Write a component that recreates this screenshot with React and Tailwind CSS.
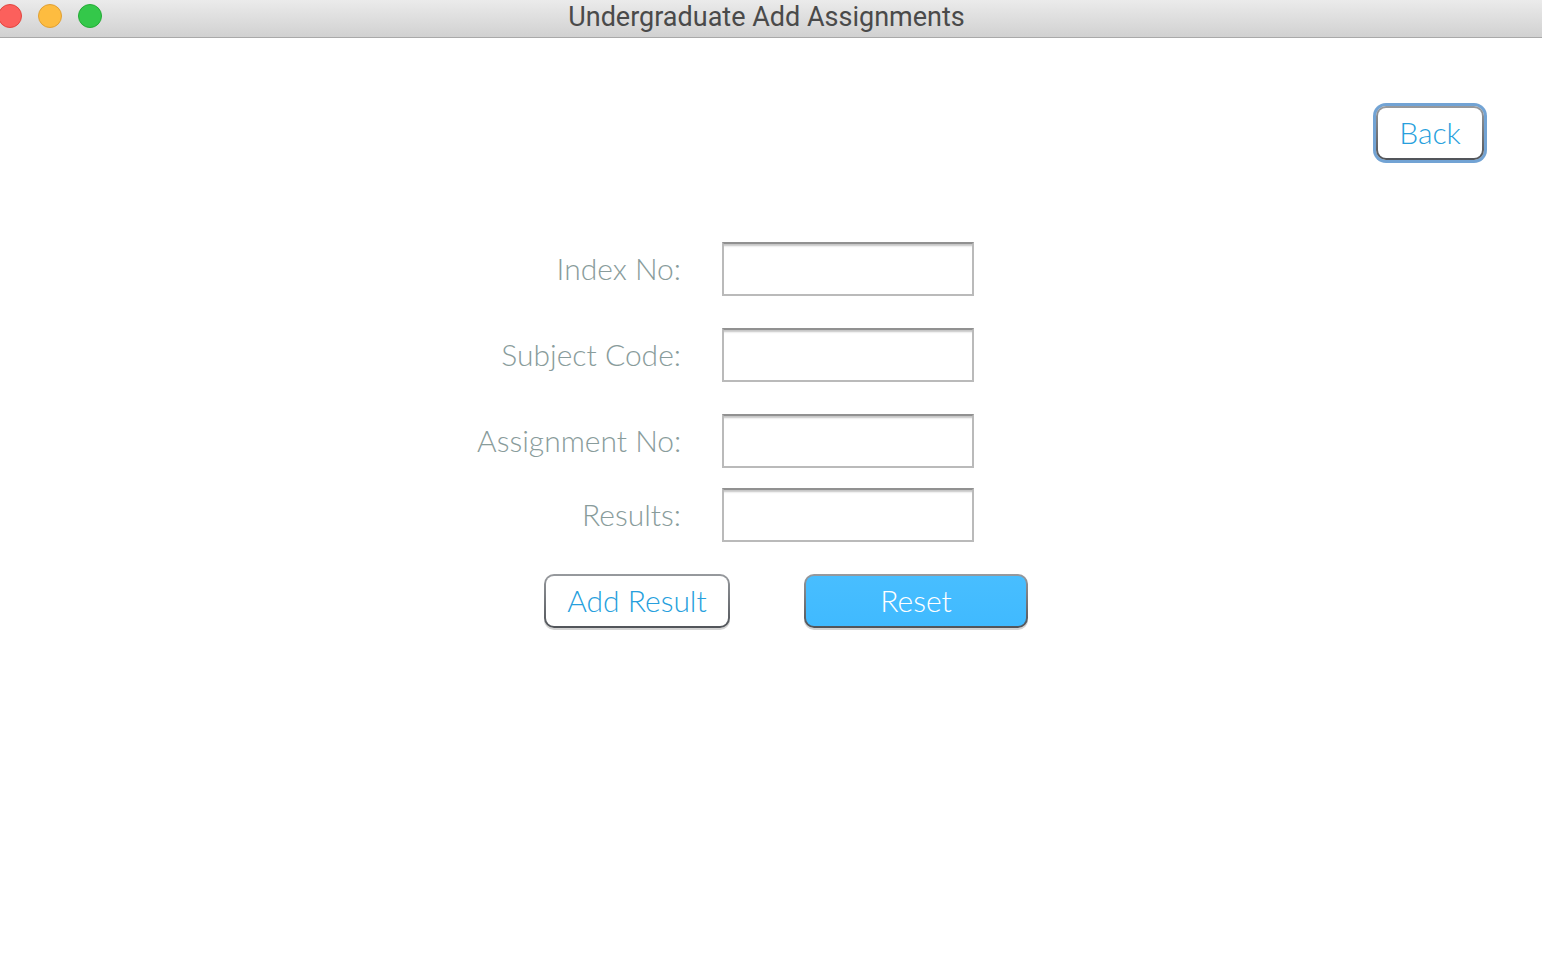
import React from "react";

const fields = [
  { id: "index-no", label: "Index No:", gap: "" },
  { id: "subject-code", label: "Subject Code:", gap: "mt-8" },
  { id: "assignment-no", label: "Assignment No:", gap: "mt-8" },
  { id: "results", label: "Results:", gap: "mt-5" },
];

const buttonBase =
  "h-[54px] rounded-[10px] border-2 border-transparent pb-0.5 text-center text-[30px] leading-[48px] font-light outline-none";
const whiteFace =
  "text-[#279fdd] [background:linear-gradient(#fff,#fff)_padding-box,linear-gradient(#979a9e,#515459)_border-box]";
const blueFace =
  "text-white [background:linear-gradient(#48beff,#40baff)_padding-box,linear-gradient(#979a9e,#515459)_border-box]";

function TitleBar() {
  return (
    <header className="grid h-[38px] grid-cols-[1fr_auto_1fr] border-b border-[#a9a9a9] bg-linear-to-b from-[#ebebeb] to-[#d1d1d1] pr-[9px]">
      <div className="-ml-0.5 flex gap-4 pt-1">
        <button type="button" aria-label="Close" className="size-6 rounded-full border border-[#e2463f] bg-[#fc605c]" />
        <button type="button" aria-label="Minimize" className="size-6 rounded-full border border-[#e0a033] bg-[#fdbc40]" />
        <button type="button" aria-label="Zoom" className="size-6 rounded-full border border-[#24ab35] bg-[#34c84a]" />
      </div>
      <h1 className="font-[Roboto,sans-serif] text-[27px] leading-[34px] text-[#4a4a4a]">
        Undergraduate Add Assignments
      </h1>
    </header>
  );
}

export default function App() {
  return (
    <div className="min-h-screen bg-white font-[Lato,sans-serif]">
      <TitleBar />
      <main>
        <div className="flex justify-end pt-[68px] pr-[58px]">
          <button type="button" className={`${buttonBase} ${whiteFace} w-[108px] ring-3 ring-[#72a3d4]`}>
            Back
          </button>
        </div>
        <form className="mt-[82px] flex justify-center pr-[37px]" onSubmit={(e) => e.preventDefault()}>
          <div className="flex w-[551px] flex-col">
            {fields.map((f) => (
              <div key={f.id} className={`flex gap-[41px] pr-[54px] ${f.gap}`}>
                <label htmlFor={f.id} className="flex-1 text-right text-[30px] leading-[52px] font-light whitespace-nowrap text-[#899c9b]">
                  {f.label}
                </label>
                <input
                  id={f.id}
                  type="text"
                  className="h-[54px] w-[252px] border-2 border-[#bababa] border-t-[#919191] bg-white px-3 text-2xl shadow-[inset_0_4px_2px_-2px_#c4c4c4] outline-none"
                />
              </div>
            ))}
            <div className="mt-8 flex justify-end gap-[74px]">
              <button type="submit" className={`${buttonBase} ${whiteFace} w-[186px] shadow-[0_2px_0_#d3d3d3]`}>
                Add Result
              </button>
              <button type="reset" className={`${buttonBase} ${blueFace} w-[224px] shadow-[0_2px_0_#d3d3d3]`}>
                Reset
              </button>
            </div>
          </div>
        </form>
      </main>
    </div>
  );
}
